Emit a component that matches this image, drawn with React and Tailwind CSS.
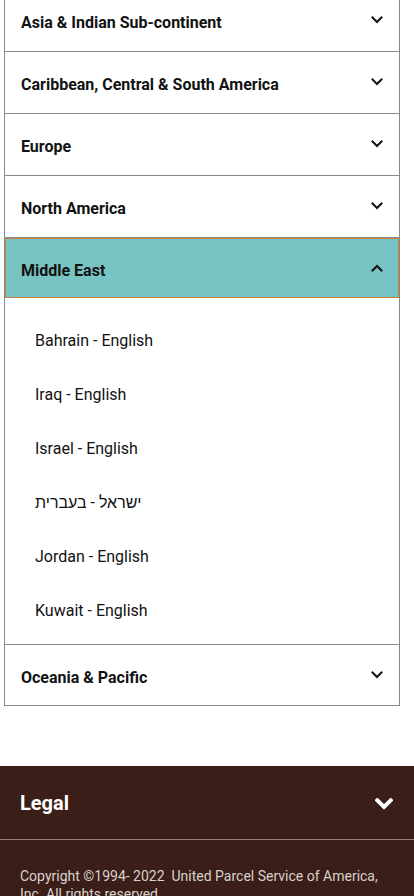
import { useState } from 'react';

const regions = [
  { name: 'Asia & Indian Sub-continent' },
  { name: 'Caribbean, Central & South America' },
  { name: 'Europe' },
  { name: 'North America' },
  {
    name: 'Middle East',
    countries: [
      'Bahrain - English',
      'Iraq - English',
      'Israel - English',
      'ישראל - בעברית',
      'Jordan - English',
      'Kuwait - English',
    ],
  },
  { name: 'Oceania & Pacific' },
];

const Chevron = ({ up, className }) => (
  <svg viewBox="0 0 12 8" className={className} fill="none" stroke="currentColor" strokeWidth="2" strokeLinecap="square">
    {up ? <path d="M1.5 6.5 L6 2 L10.5 6.5" /> : <path d="M1.5 1.5 L6 6 L10.5 1.5" />}
  </svg>
);

const App = () => {
  const [open, setOpen] = useState('Middle East');

  return (
    <div className="min-h-[896px] bg-white font-['Roboto','Liberation_Sans',sans-serif]">
      {/* Country selector */}
      <div className="ml-[4px] w-[396px] -mt-[11px] border border-[#8a8a8a]">
        {regions.map((region, i) => {
          const isOpen = open === region.name;
          const last = i === regions.length - 1;
          return (
            <div key={region.name} className={last ? '' : 'border-b border-[#8a8a8a]'}>
              {isOpen ? (
                <button
                  onClick={() => setOpen(null)}
                  className="w-full flex items-start justify-between bg-[#78c3c3] border border-[#c8813a] pl-[15px] pr-[15px] pt-[20px] pb-[14px] text-left"
                >
                  <span className="text-[16px] leading-6 font-bold text-[#121212]">{region.name}</span>
                  <Chevron up className="w-[12px] h-[8px] mt-[5px] text-[#121212]" />
                </button>
              ) : (
                <button
                  onClick={() => setOpen(region.name)}
                  className={`w-full flex items-start justify-between pl-[16px] pr-[16px] pt-[21px] text-left ${last ? 'pb-[15px]' : 'pb-[16px]'}`}
                >
                  <span className="text-[16px] leading-6 font-bold text-[#121212]">{region.name}</span>
                  <Chevron className="w-[12px] h-[8px] mt-[5px] text-[#121212]" />
                </button>
              )}
              {isOpen && region.countries && (
                <ul className="pt-[16px] pb-[6px] border-b border-[#8a8a8a] -mb-px">
                  {region.countries.map((c) => (
                    <li key={c} className="pl-[30px] py-[15px] text-[16px] leading-6 text-[#121212]">
                      {c}
                    </li>
                  ))}
                </ul>
              )}
            </div>
          );
        })}
      </div>

      {/* Footer */}
      <footer className="mt-[60px] bg-[#3a1e17] text-white">
        <div className="flex items-start justify-between px-[20px] pt-[23px] pb-[22px] border-b border-[#8f807b]">
          <span className="text-[20px] leading-7 font-bold">Legal</span>
          <Chevron className="w-[18px] h-[12px] mt-[9px] mr-[1px] [&_path]:stroke-[2.6]" />
        </div>
        <p className="px-[20px] pt-[27px] pb-[20px] text-[14px] leading-[18px] text-[#d8d2cf]">
          Copyright ©1994- 2022&nbsp; United Parcel Service of America, Inc. All rights reserved.
        </p>
      </footer>
    </div>
  );
};

export default App;
